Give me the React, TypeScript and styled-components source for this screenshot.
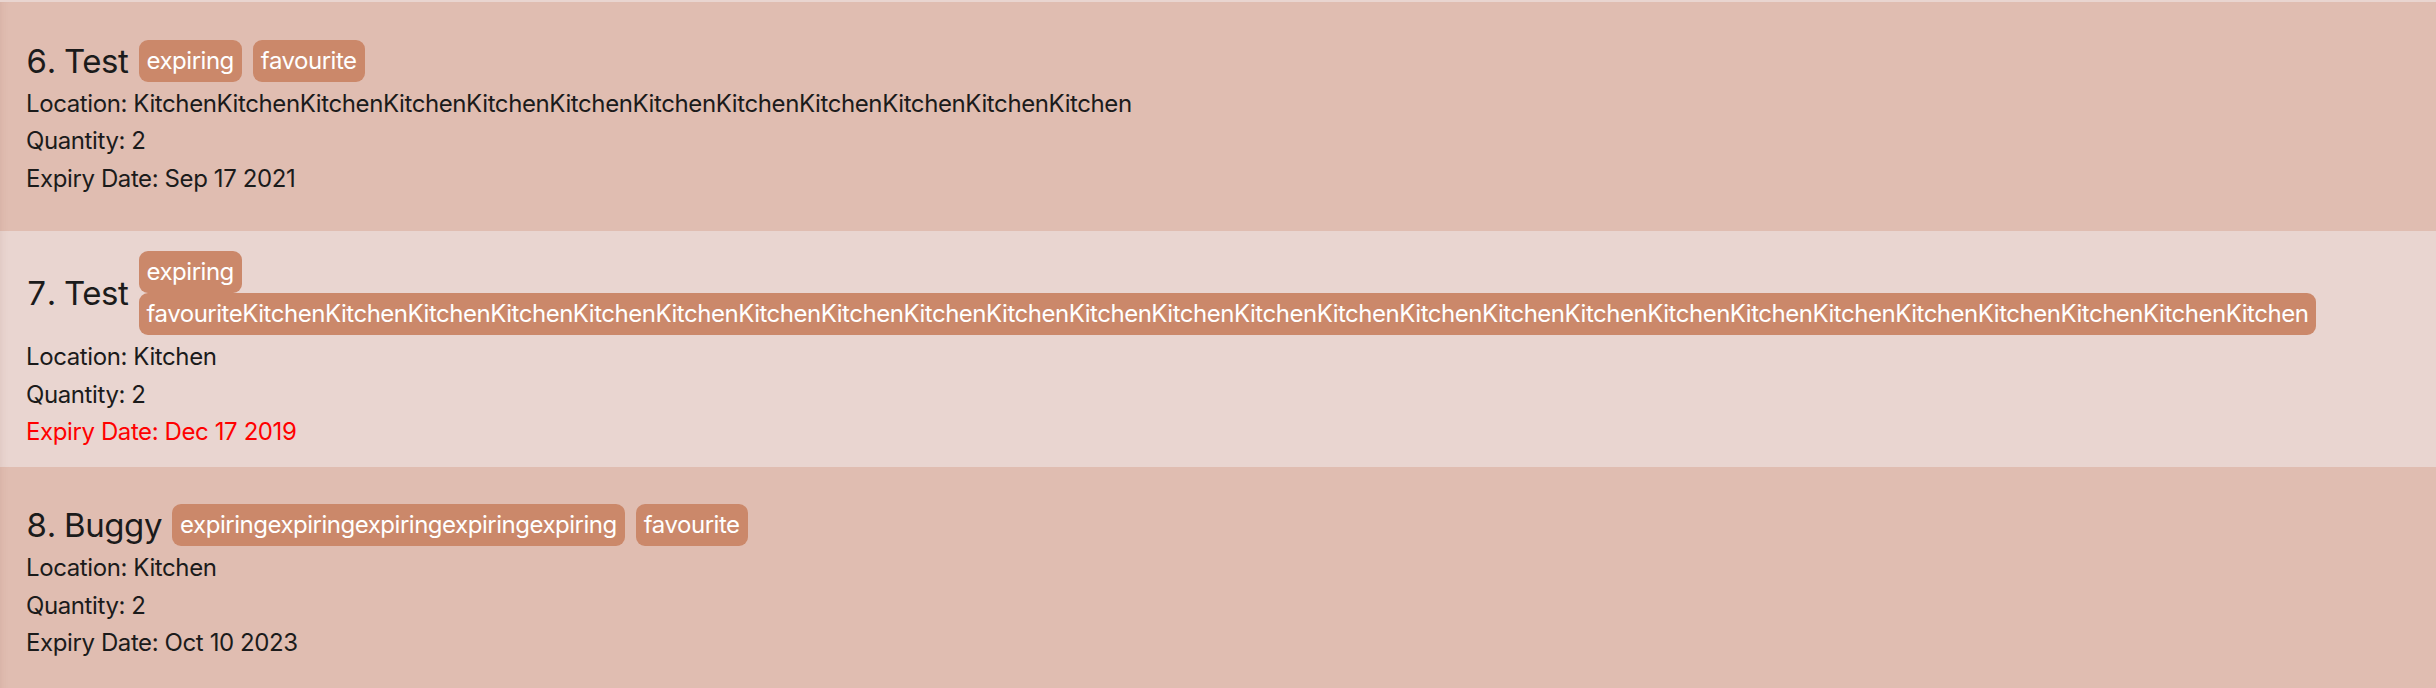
import React from "react";
import styled, { createGlobalStyle } from "styled-components";

const GlobalStyle = createGlobalStyle`
  html, body {
    margin: 0;
    padding: 0;
    background: #e0bdb1;
  }
  body {
    font-family: Inter, "Noto Sans", sans-serif;
  }
`;

const List = styled.div`
  width: 2436px;
  height: 688px;
  overflow: hidden;
  border-top: 2px solid #e9d5d0;
  box-sizing: border-box;
`;

const Card = styled.div<{ $alt?: boolean }>`
  min-height: 229px;
  box-sizing: border-box;
  padding: 20px 26px 16px;
  display: flex;
  flex-direction: column;
  justify-content: center;
  background: ${(p) => (p.$alt ? "#e9d5d0" : "#e0bdb1")};
  box-shadow: inset 8px 0 8px -8px rgba(120, 60, 40, 0.12);
`;

const Header = styled.div`
  display: flex;
  align-items: center;
  gap: 10px;
  margin-bottom: 3px;
`;

const Title = styled.span`
  font-size: 33px;
  letter-spacing: -0.4px;
  font-feature-settings: "tnum" 1;
  color: #1b1b1b;
  white-space: nowrap;
  flex: none;
`;

const Tags = styled.div`
  display: flex;
  flex-wrap: wrap;
  gap: 0 11px;
  min-width: 0;
`;

const Tag = styled.span`
  background: #cb886a;
  color: #ffffff;
  font-size: 24px;
  letter-spacing: -0.48px;
  line-height: 32px;
  padding: 5px 8px;
  border-radius: 9px;
  white-space: nowrap;
`;

const Line = styled.div<{ $expired?: boolean }>`
  font-size: 24px;
  letter-spacing: -0.4px;
  line-height: 37.5px;
  color: ${(p) => (p.$expired ? "#ff0000" : "#1b1b1b")};
  white-space: nowrap;
`;

type Item = {
  index: number;
  name: string;
  tags: string[];
  location: string;
  quantity: number;
  expiry: string;
  expired?: boolean;
};

const items: Item[] = [
  {
    index: 6,
    name: "Test",
    tags: ["expiring", "favourite"],
    location: "Kitchen".repeat(12),
    quantity: 2,
    expiry: "Sep 17 2021",
  },
  {
    index: 7,
    name: "Test",
    tags: ["expiring", "favourite" + "Kitchen".repeat(25)],
    location: "Kitchen",
    quantity: 2,
    expiry: "Dec 17 2019",
    expired: true,
  },
  {
    index: 8,
    name: "Buggy",
    tags: ["expiring".repeat(5), "favourite"],
    location: "Kitchen",
    quantity: 2,
    expiry: "Oct 10 2023",
  },
];

export default function App() {
  return (
    <>
      <GlobalStyle />
      <List>
        {items.map((it, i) => (
          <Card key={it.index} $alt={i % 2 === 1}>
            <Header>
              <Title>
                {it.index}. {it.name}
              </Title>
              <Tags>
                {it.tags.map((t, j) => (
                  <Tag key={j}>{t}</Tag>
                ))}
              </Tags>
            </Header>
            <Line>Location: {it.location}</Line>
            <Line>Quantity: {it.quantity}</Line>
            <Line $expired={it.expired}>Expiry Date: {it.expiry}</Line>
          </Card>
        ))}
      </List>
    </>
  );
}
